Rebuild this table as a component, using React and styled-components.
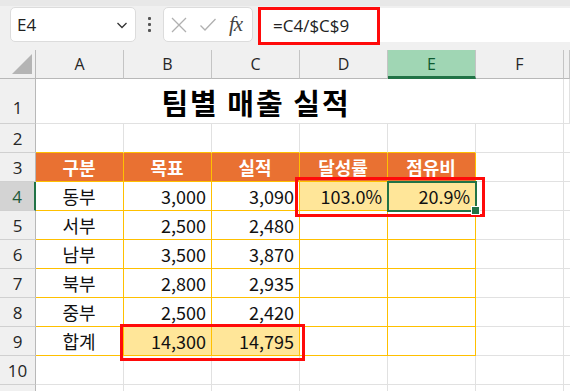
import React from "react";
import styled, { createGlobalStyle } from "styled-components";

const GlobalStyle = createGlobalStyle`
  html, body { margin: 0; padding: 0; background: #ffffff; }
  body { font-family: "Noto Sans CJK KR", "Noto Sans", sans-serif; }
  * { box-sizing: border-box; }
`;

const Page = styled.div`
  width: 570px;
  height: 391px;
  overflow: hidden;
  position: relative;
  background: #ffffff;
`;

const Toolbar = styled.div`
  position: relative;
  height: 50px;
  background: #f0f0f0;
  border-top: 6px solid #e8e8e8;
  display: flex;
  align-items: flex-start;
  padding: 1px 0 0 10px;
`;

const NameBox = styled.div`
  width: 126px;
  height: 35px;
  background: #fff;
  border: 1px solid #dcdcdc;
  border-radius: 5px;
  display: flex;
  align-items: center;
  justify-content: space-between;
  padding: 0 6px 0 6px;
  font-family: "Open Sans", "Noto Sans", sans-serif;
  font-size: 17px;
  color: #222;
`;

const Dots = styled.div`
  width: 27px;
  height: 35px;
  display: flex;
  flex-direction: column;
  align-items: center;
  justify-content: center;
  gap: 3px;
  & span {
    width: 3px;
    height: 3px;
    background: #555;
    border-radius: 1px;
  }
`;

const FxBox = styled.div`
  width: 90px;
  height: 35px;
  background: #fff;
  border: 1px solid #dcdcdc;
  border-radius: 5px;
  display: flex;
  align-items: center;
  padding: 0 0 0 6px;
  gap: 11px;
`;

const FxText = styled.span`
  font-family: "Liberation Serif", "DejaVu Serif", serif;
  font-style: italic;
  font-size: 21px;
  color: #444;
  margin-left: 1px;
  letter-spacing: -1px;
`;

const FormulaInput = styled.div`
  flex: 1;
  height: 34px;
  margin-left: 5px;
  margin-top: 1px;
  background: #fff;
  display: flex;
  align-items: center;
  padding-left: 15px;
  font-family: "Open Sans", "Noto Sans", sans-serif;
  font-size: 17px;
  color: #222;
`;

const RedBox = styled.div`
  position: absolute;
  border: 3px solid #ff0a0a;
  pointer-events: none;
`;

const Sheet = styled.div`
  position: relative;
  display: grid;
  grid-template-columns: 36px repeat(6, 88px) 6px;
  grid-template-rows: 29px 45px repeat(10, 29px);
`;

const Corner = styled.div`
  background: #f0f0f0;
  border-right: 1px solid #b8b8b8;
  border-bottom: 1px solid #b8b8b8;
  position: relative;
  &::after {
    content: "";
    position: absolute;
    right: 3px;
    bottom: 4px;
    width: 0;
    height: 0;
    border-left: 20px solid transparent;
    border-bottom: 20px solid #b4b4b4;
  }
`;

const ColHead = styled.div`
  background: ${(p) => (p.$active ? "#a0d6b4" : "#f0f0f0")};
  border-right: 1px solid #c4c4c4;
  border-bottom: ${(p) => (p.$active ? "3px solid #217346" : "1px solid #b8b8b8")};
  color: ${(p) => (p.$active ? "#0e5a30" : "#262626")};
  font-family: "Open Sans", "Noto Sans", sans-serif;
  font-size: 16px;
  display: flex;
  align-items: center;
  justify-content: center;
  padding-top: ${(p) => (p.$active ? "2px" : "0")};
`;

const RowHead = styled.div`
  background: ${(p) => (p.$active ? "#d3d3d3" : "#f0f0f0")};
  border-right: ${(p) => (p.$active ? "2px solid #217346" : "1px solid #b8b8b8")};
  border-bottom: 1px solid #d0d0d0;
  color: ${(p) => (p.$active ? "#1e5a3a" : "#262626")};
  font-family: "Open Sans", "Noto Sans", sans-serif;
  font-size: 17px;
  display: flex;
  align-items: ${(p) => (p.$tall ? "flex-end" : "center")};
  padding-bottom: ${(p) => (p.$tall ? "4px" : "0")};
  justify-content: center;
`;

const Cell = styled.div`
  background: ${(p) => p.$fill || "#ffffff"};
  border-right: 1px solid ${(p) => p.$rc || "#e1e1e1"};
  border-bottom: 1px solid ${(p) => p.$bc || "#e1e1e1"};
  color: ${(p) => p.$color || "#111"};
  font-weight: ${(p) => (p.$bold ? 700 : 400)};
  font-size: 18px;
  display: flex;
  align-items: center;
  justify-content: ${(p) =>
    p.$align === "right" ? "flex-end" : p.$align === "center" ? "center" : "flex-start"};
  padding: 0 5px 1px 4px;
  white-space: nowrap;
  overflow: visible;
`;

const TitleCell = styled.div`
  grid-column: 2 / span 5;
  border-bottom: 1px solid #e1e1e1;
  display: flex;
  align-items: center;
  justify-content: center;
  font-size: 29px;
  font-weight: 700;
  color: #000;
  letter-spacing: 2px;
  padding-top: 2px;
`;

const PlainCell = styled.div`
  border-right: 1px solid #e1e1e1;
  border-bottom: 1px solid #e1e1e1;
`;

const ActiveCell = styled.div`
  position: absolute;
  border: 2px solid #217346;
  pointer-events: none;
  &::after {
    content: "";
    position: absolute;
    right: -5px;
    bottom: -5px;
    width: 7px;
    height: 7px;
    background: #217346;
    border: 1px solid #fff;
  }
`;

const Y = "#ffc000";
const HDR = "#e97132";
const HL = "#ffe699";

const header = ["구분", "목표", "실적", "달성률", "점유비"];
const rows = [
  ["동부", "3,000", "3,090", "103.0%", "20.9%"],
  ["서부", "2,500", "2,480", "", ""],
  ["남부", "3,500", "3,870", "", ""],
  ["북부", "2,800", "2,935", "", ""],
  ["중부", "2,500", "2,420", "", ""],
  ["합계", "14,300", "14,795", "", ""],
];

const cols = ["A", "B", "C", "D", "E", "F"];

function Chevron() {
  return (
    <svg width="14" height="14" viewBox="0 0 14 14">
      <path d="M2.5 5 L7 9.5 L11.5 5" fill="none" stroke="#333" strokeWidth="1.3" />
    </svg>
  );
}

function XIcon() {
  return (
    <svg width="18" height="18" viewBox="0 0 18 18">
      <path d="M2 2 L16 16 M16 2 L2 16" stroke="#b0b0b0" strokeWidth="1.3" fill="none" />
    </svg>
  );
}

function CheckIcon() {
  return (
    <svg width="18" height="18" viewBox="0 0 18 18">
      <path d="M1.5 9.5 L6 14 L16.5 3" stroke="#b0b0b0" strokeWidth="1.3" fill="none" />
    </svg>
  );
}

export default function App() {
  return (
    <Page>
      <GlobalStyle />
      <Toolbar>
        <NameBox>
          <span>E4</span>
          <Chevron />
        </NameBox>
        <Dots>
          <span />
          <span />
          <span />
        </Dots>
        <FxBox>
          <XIcon />
          <CheckIcon />
          <FxText>fx</FxText>
        </FxBox>
        <FormulaInput>=C4/$C$9</FormulaInput>
        <RedBox style={{ left: 258, top: 1, width: 122, height: 38 }} />
      </Toolbar>
      <Sheet>
        <Corner />
        {cols.map((c) => (
          <ColHead key={c} $active={c === "E"}>
            {c}
          </ColHead>
        ))}
        <ColHead />

        <RowHead $tall>1</RowHead>
        <TitleCell>팀별 매출 실적</TitleCell>
        <PlainCell />
        <PlainCell />

        <RowHead>2</RowHead>
        {[0, 1, 2, 3, 4].map((i) => (
          <Cell key={i} $bc={Y} />
        ))}
        <Cell />
        <Cell />

        <RowHead>3</RowHead>
        {header.map((h) => (
          <Cell key={h} $fill={HDR} $color="#fff" $bold $align="center" $rc={Y} $bc={Y}>
            {h}
          </Cell>
        ))}
        <Cell />
        <Cell />

        {rows.map((r, ri) => {
          const rowNum = ri + 4;
          return (
            <React.Fragment key={rowNum}>
              <RowHead $active={rowNum === 4}>{rowNum}</RowHead>
              {r.map((v, ci) => {
                const hl =
                  (rowNum === 4 && ci >= 3) || (rowNum === 9 && (ci === 1 || ci === 2));
                return (
                  <Cell
                    key={ci}
                    $fill={hl ? HL : undefined}
                    $align={ci === 0 ? "center" : "right"}
                    $rc={Y}
                    $bc={Y}
                  >
                    {v}
                  </Cell>
                );
              })}
              <Cell />
              <Cell />
            </React.Fragment>
          );
        })}

        <RowHead>10</RowHead>
        {[0, 1, 2, 3, 4, 5, 6].map((i) => (
          <Cell key={i} />
        ))}
        <RowHead />
        {[0, 1, 2, 3, 4, 5, 6].map((i) => (
          <Cell key={i} />
        ))}

        <RedBox style={{ left: 295, top: 127, width: 190, height: 40 }} />
        <ActiveCell style={{ left: 387, top: 131, width: 90, height: 31 }} />
        <RedBox style={{ left: 120, top: 274, width: 185, height: 37 }} />
      </Sheet>
    </Page>
  );
}
